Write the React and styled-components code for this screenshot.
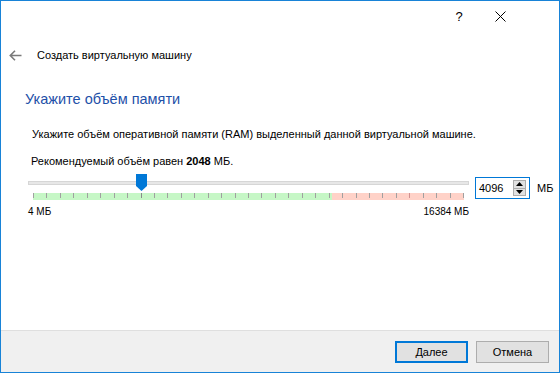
import React from "react";
import styled, { createGlobalStyle } from "styled-components";

const Global = createGlobalStyle`
  html, body { margin: 0; padding: 0; background: #fff; }
  body { font-family: "Segoe UI", "Liberation Sans", Arial, sans-serif; font-size: 11px; color: #000; }
  * { box-sizing: border-box; }
`;

const Window = styled.div`
  width: 560px;
  height: 373px;
  border: 1px solid #1883d7;
  background: #fff;
  display: flex;
  flex-direction: column;
`;

const TitleBar = styled.div`
  height: 30px;
  display: flex;
  justify-content: flex-end;
  align-items: center;
  padding-right: 53px;
  gap: 29px;
`;

const CaptionButton = styled.span`
  width: 12px;
  display: flex;
  justify-content: center;
  align-items: center;
  font-size: 13px;
  color: #000;
`;

const Header = styled.div`
  display: flex;
  align-items: center;
  height: 22px;
  margin-top: 13px;
  padding-left: 8px;
  gap: 15px;
`;

const HeaderTitle = styled.span`
  font-size: 11px;
  color: #000;
`;

const Body = styled.div`
  flex: 1;
  padding: 0 0 0 24px;
  display: flex;
  flex-direction: column;
`;

const Heading = styled.h1`
  margin: 23px 0 0 0;
  font-size: 14.5px;
  font-weight: normal;
  color: #1e50a8;
  line-height: 20px;
`;

const Para = styled.p`
  margin: ${(p) => p.$mt}px 0 0 ${(p) => p.$ml}px;
  font-size: 11px;
  line-height: 16px;
`;

const SliderRow = styled.div`
  display: flex;
  align-items: flex-start;
  margin-top: 5px;
  margin-left: 3px;
`;

const SliderBox = styled.div`
  width: 441px;
  display: flex;
  flex-direction: column;
`;

const TrackArea = styled.div`
  position: relative;
  height: 18px;
`;

const Track = styled.div`
  position: absolute;
  left: 0;
  right: 0;
  top: 7px;
  height: 4px;
  background: #e7e7e7;
  border: 1px solid #d6d6d6;
`;

const Thumb = styled.div`
  position: absolute;
  top: 0;
  width: 11px;
  height: 17px;
  background: #0078d7;
  clip-path: polygon(0 0, 100% 0, 100% 70%, 50% 100%, 0 70%);
`;

const Scale = styled.div`
  position: relative;
  margin-left: 5px;
  width: 431px;
  height: 7px;
  margin-top: 1px;
  display: flex;
`;

const Zone = styled.div`
  height: 100%;
  background: ${(p) => p.$c};
`;

const Tick = styled.div`
  position: absolute;
  top: 0;
  width: 1px;
  height: 5px;
  background: ${(p) => p.$c || "#a0a0a0"};
`;

const Labels = styled.div`
  display: flex;
  justify-content: space-between;
  margin-top: 5px;
  font-size: 10px;
  line-height: 14px;
`;

const SpinWrap = styled.div`
  display: flex;
  align-items: center;
  margin-left: 6px;
  margin-top: 3px;
  gap: 7px;
`;

const Spin = styled.div`
  width: 55px;
  height: 22px;
  border: 1px solid #0078d7;
  display: flex;
  align-items: center;
  padding-left: 3px;
  padding-right: 3px;
`;

const SpinValue = styled.span`
  flex: 1;
  font-size: 11px;
`;

const SpinButtons = styled.div`
  width: 13px;
  height: 16px;
  border: 1px solid #adadad;
  background: #e1e1e1;
  display: flex;
  flex-direction: column;
`;

const SpinBtn = styled.div`
  flex: 1;
  display: flex;
  align-items: center;
  justify-content: center;
  & + & { border-top: 1px solid #adadad; }
`;

const Unit = styled.span`
  font-size: 11px;
`;

const Footer = styled.div`
  height: 42px;
  border-top: 1px solid #dfdfdf;
  background: #f0f0f0;
  display: flex;
  justify-content: flex-end;
  align-items: center;
  gap: 8px;
  padding-right: 10px;
`;

const Button = styled.button`
  width: 73px;
  height: 22px;
  font-family: inherit;
  font-size: 11px;
  color: #000;
  background: #e1e1e1;
  border: ${(p) => (p.$primary ? "2px solid #0078d7" : "1px solid #adadad")};
  padding: 0;
  margin: 0;
  display: flex;
  align-items: center;
  justify-content: center;
`;

const Ul = styled.span`
  text-decoration: underline;
`;

const TICKS = 32;
const SCALE_W = 431;

export default function App() {
  const ticks = [];
  for (let i = 0; i <= TICKS; i++) {
    const x = Math.round((i * (SCALE_W - 1)) / TICKS);
    let c;
    if (i === 8) c = "#8a8a8a";
    if (i === 28) c = "#d09090";
    ticks.push(<Tick key={i} style={{ left: x }} $c={c} />);
  }
  return (
    <>
      <Global />
      <Window>
        <TitleBar>
          <CaptionButton>?</CaptionButton>
          <CaptionButton>
            <svg width="11" height="11" viewBox="0 0 11 11">
              <path d="M0.5 0.5 L10.5 10.5 M10.5 0.5 L0.5 10.5" stroke="#000" strokeWidth="1" />
            </svg>
          </CaptionButton>
        </TitleBar>
        <Header>
          <svg width="13" height="11" viewBox="0 0 13 11">
            <path d="M6 0.8 L1.3 5.5 L6 10.2 M1.3 5.5 H12.5" stroke="#7a7a7a" strokeWidth="1.6" fill="none" />
          </svg>
          <HeaderTitle>Создать виртуальную машину</HeaderTitle>
        </Header>
        <Body>
          <Heading>Укажите объём памяти</Heading>
          <Para $mt={17} $ml={7}>
            Укажите объём оперативной памяти (RAM) выделенный данной виртуальной машине.
          </Para>
          <Para $mt={11} $ml={6}>
            Рекомендуемый объём равен <b>2048</b> МБ.
          </Para>
          <SliderRow>
            <SliderBox>
              <TrackArea>
                <Track />
                <Thumb style={{ left: 108 }} />
              </TrackArea>
              <Scale>
                <Zone $c="#c6f7c6" style={{ width: 299 }} />
                <Zone $c="#ffd2c8" style={{ flex: 1 }} />
                {ticks}
              </Scale>
              <Labels>
                <span>4 МБ</span>
                <span>16384 МБ</span>
              </Labels>
            </SliderBox>
            <SpinWrap>
              <Spin>
                <SpinValue>4096</SpinValue>
                <SpinButtons>
                  <SpinBtn>
                    <svg width="7" height="4" viewBox="0 0 7 4"><path d="M3.5 0 L7 4 H0 Z" fill="#000" /></svg>
                  </SpinBtn>
                  <SpinBtn>
                    <svg width="7" height="4" viewBox="0 0 7 4"><path d="M0 0 H7 L3.5 4 Z" fill="#000" /></svg>
                  </SpinBtn>
                </SpinButtons>
              </Spin>
              <Unit>МБ</Unit>
            </SpinWrap>
          </SliderRow>
        </Body>
        <Footer>
          <Button $primary>
            <Ul>Д</Ul>алее
          </Button>
          <Button>Отмена</Button>
        </Footer>
      </Window>
    </>
  );
}
